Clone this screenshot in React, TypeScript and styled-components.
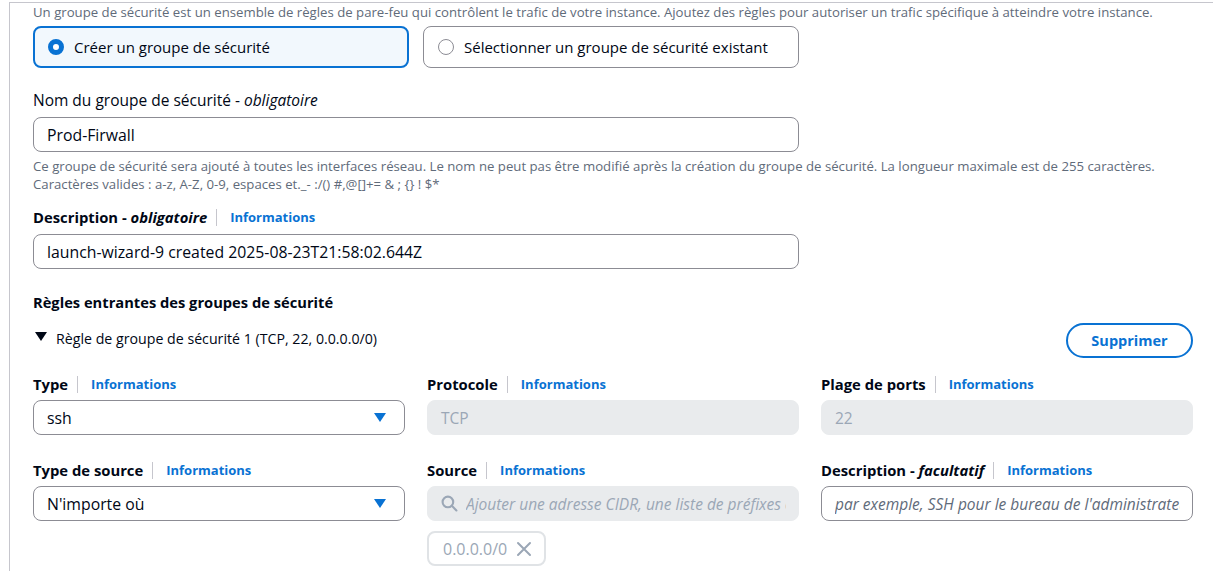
import React from "react";
import styled, { createGlobalStyle } from "styled-components";

const Global = createGlobalStyle`
  html, body { margin: 0; padding: 0; background: #ffffff; }
  body { font-family: "Open Sans", "Noto Sans", sans-serif; color: #000716; overflow: hidden; }
  * { box-sizing: border-box; }
`;

const Card = styled.div`
  margin: 2px 0 0 9px;
  border-top: 1px solid #c6c6cd;
  border-left: 1px solid #c6c6cd;
  min-height: 580px;
  padding: 0 0 0 23px;
  width: 1220px;
`;

const Help = styled.div<{ $size: number; $mt?: number }>`
  font-size: ${(p) => p.$size}px;
  line-height: 18px;
  color: #5f6b7a;
  width: 1175px;
  white-space: nowrap;
  margin-top: ${(p) => p.$mt ?? 0}px;
`;

const Tiles = styled.div`
  display: flex;
  gap: 14px;
  margin-top: 5px;
`;

const Tile = styled.div<{ $on?: boolean }>`
  width: 376px;
  height: 42px;
  border-radius: 8px;
  border: ${(p) => (p.$on ? "2px solid #0972d3" : "1px solid #8c8c94")};
  background: ${(p) => (p.$on ? "#f2f8fd" : "#ffffff")};
  display: flex;
  align-items: center;
  padding-left: ${(p) => (p.$on ? "13px" : "14px")};
  gap: 10px;
  font-size: 15px;
`;

const Radio = styled.span<{ $on?: boolean }>`
  width: 16px;
  height: 16px;
  border-radius: 50%;
  flex: none;
  border: ${(p) => (p.$on ? "5px solid #0972d3" : "1px solid #8c8c94")};
  background: #ffffff;
`;

const Label = styled.div<{ $bold?: boolean; $mt: number }>`
  display: flex;
  align-items: center;
  height: 22px;
  margin-top: ${(p) => p.$mt}px;
  font-size: ${(p) => (p.$bold ? "14.8px" : "15.5px")};
  font-weight: ${(p) => (p.$bold ? 700 : 400)};
  white-space: nowrap;
`;

const Sep = styled.span`
  width: 1px;
  height: 17px;
  background: #c6c6cd;
  margin: 0 13px 0 9px;
`;

const Link = styled.span`
  color: #0972d3;
  font-size: 13px;
  font-weight: 700;
`;

const Input = styled.div<{ $w?: number; $mt?: number; $disabled?: boolean; $placeholder?: boolean }>`
  width: ${(p) => (p.$w ? `${p.$w}px` : "100%")};
  height: 35px;
  margin-top: ${(p) => p.$mt ?? 6}px;
  border-radius: 8px;
  border: 1px solid ${(p) => (p.$disabled ? "#e9ebed" : "#8c8c94")};
  background: ${(p) => (p.$disabled ? "#e9ebed" : "#ffffff")};
  color: ${(p) => (p.$disabled ? "#9ba7b6" : p.$placeholder ? "#5f6b7a" : "#000716")};
  font-style: ${(p) => (p.$placeholder ? "italic" : "normal")};
  display: flex;
  align-items: center;
  padding: 0 12px 0 13px;
  font-size: ${(p) => (p.$placeholder || p.$disabled ? "15.5px" : "15.8px")};
  gap: 8px;
  overflow: hidden;
  white-space: nowrap;
`;

const Clip = styled.span`
  flex: 1;
  overflow: hidden;
  white-space: nowrap;
`;

const Heading = styled.div`
  margin-top: 22px;
  height: 22px;
  line-height: 22px;
  font-size: 14.7px;
  font-weight: 700;
`;

const RuleRow = styled.div`
  margin-top: 10px;
  width: 1160px;
  display: flex;
  align-items: flex-start;
  justify-content: space-between;
`;

const RuleTitle = styled.div`
  display: flex;
  align-items: center;
  gap: 9px;
  font-size: 14.2px;
  height: 30px;
  padding-left: 2px;
  color: #000716;
`;

const Caret = styled.span`
  width: 0;
  height: 0;
  border-left: 6px solid transparent;
  border-right: 6px solid transparent;
  border-top: 9px solid #000716;
  margin-top: -3px;
`;

const DelButton = styled.button`
  width: 127px;
  height: 35px;
  border: 2px solid #0972d3;
  border-radius: 20px;
  background: #ffffff;
  color: #0972d3;
  font-family: inherit;
  font-size: 14.5px;
  font-weight: 700;
  padding: 0;
`;

const Grid = styled.div<{ $mt: number }>`
  display: grid;
  grid-template-columns: 372px 372px 372px;
  column-gap: 22px;
  margin-top: ${(p) => p.$mt}px;
`;

const Field = styled.div``;

const Arrow = styled.span`
  width: 0;
  height: 0;
  border-left: 6px solid transparent;
  border-right: 6px solid transparent;
  border-top: 9px solid #0972d3;
  margin-right: 6px;
`;

const Chip = styled.div`
  margin-top: 10px;
  width: 119px;
  height: 35px;
  border: 2px solid #e0e3e6;
  border-radius: 8px;
  display: flex;
  align-items: center;
  padding-left: 14px;
  gap: 9px;
  color: #9ba7b6;
  font-size: 16px;
`;

const InfoLabel = ({ children, mt = 0 }: { children: React.ReactNode; mt?: number }) => (
  <Label $bold $mt={mt}>
    {children}
    <Sep />
    <Link>Informations</Link>
  </Label>
);

const SearchIcon = () => (
  <svg width="17" height="17" viewBox="0 0 16 16" fill="none" stroke="#9ba7b6" strokeWidth="2">
    <circle cx="6.5" cy="6.5" r="5" />
    <path d="M10.2 10.2 L14.5 14.5" strokeLinecap="round" />
  </svg>
);

const XIcon = () => (
  <svg width="16" height="16" viewBox="0 0 16 16" fill="none" stroke="#9ba7b6" strokeWidth="2" strokeLinecap="round">
    <path d="M2 2 L14 14 M14 2 L2 14" />
  </svg>
);

export default function App() {
  return (
    <>
      <Global />
      <Card>
        <Help $size={13.2}>
          Un groupe de sécurité est un ensemble de règles de pare-feu qui contrôlent le trafic de votre instance. Ajoutez des règles pour autoriser un trafic spécifique à atteindre votre instance.
        </Help>
        <Tiles>
          <Tile $on>
            <Radio $on />
            Créer un groupe de sécurité
          </Tile>
          <Tile>
            <Radio />
            Sélectionner un groupe de sécurité existant
          </Tile>
        </Tiles>

        <Label $mt={21}>
          Nom du groupe de sécurité -&nbsp;<i>obligatoire</i>
        </Label>
        <Input $w={766}>Prod-Firwall</Input>
        <Help $size={13.2} $mt={5}>
          Ce groupe de sécurité sera ajouté à toutes les interfaces réseau. Le nom ne peut pas être modifié après la création du groupe de sécurité. La longueur maximale est de 255 caractères.
          <br />
          Caractères valides : a-z, A-Z, 0-9, espaces et._- :/() #,@[]+= &amp; ; {"{}"} ! $*
        </Help>

        <InfoLabel mt={13}>
          Description -&nbsp;<i>obligatoire</i>
        </InfoLabel>
        <Input $w={766}>launch-wizard-9 created 2025-08-23T21:58:02.644Z</Input>

        <Heading>Règles entrantes des groupes de sécurité</Heading>
        <RuleRow>
          <RuleTitle>
            <Caret />
            Règle de groupe de sécurité 1 (TCP, 22, 0.0.0.0/0)
          </RuleTitle>
          <DelButton>Supprimer</DelButton>
        </RuleRow>

        <Grid $mt={15}>
          <Field>
            <InfoLabel>Type</InfoLabel>
            <Input $mt={5}>
              <Clip>ssh</Clip>
              <Arrow />
            </Input>
          </Field>
          <Field>
            <InfoLabel>Protocole</InfoLabel>
            <Input $mt={5} $disabled>TCP</Input>
          </Field>
          <Field>
            <InfoLabel>Plage de ports</InfoLabel>
            <Input $mt={5} $disabled>22</Input>
          </Field>
        </Grid>

        <Grid $mt={24}>
          <Field>
            <InfoLabel>Type de source</InfoLabel>
            <Input $mt={5}>
              <Clip>N'importe où</Clip>
              <Arrow />
            </Input>
          </Field>
          <Field>
            <InfoLabel>Source</InfoLabel>
            <Input $mt={5} $disabled>
              <SearchIcon />
              <Clip>
                <i>Ajouter une adresse CIDR, une liste de préfixes ou un groupe de sécurité</i>
              </Clip>
            </Input>
            <Chip>
              0.0.0.0/0
              <XIcon />
            </Chip>
          </Field>
          <Field>
            <InfoLabel>
              Description -&nbsp;<i>facultatif</i>
            </InfoLabel>
            <Input $mt={5} $placeholder>
              <Clip>par exemple, SSH pour le bureau de l'administrateur</Clip>
            </Input>
          </Field>
        </Grid>
      </Card>
    </>
  );
}
